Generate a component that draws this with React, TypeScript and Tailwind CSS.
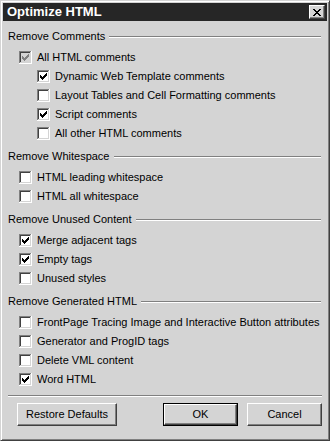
import React from 'react';

type Item = { label: string; checked?: boolean; disabled?: boolean; indent?: boolean };

const sections: { title: string; items: Item[] }[] = [
    {
        title: 'Remove Comments',
        items: [
            { label: 'All HTML comments', checked: true, disabled: true },
            { label: 'Dynamic Web Template comments', checked: true, indent: true },
            { label: 'Layout Tables and Cell Formatting comments', indent: true },
            { label: 'Script comments', checked: true, indent: true },
            { label: 'All other HTML comments', indent: true },
        ],
    },
    {
        title: 'Remove Whitespace',
        items: [{ label: 'HTML leading whitespace' }, { label: 'HTML all whitespace' }],
    },
    {
        title: 'Remove Unused Content',
        items: [
            { label: 'Merge adjacent tags', checked: true },
            { label: 'Empty tags', checked: true },
            { label: 'Unused styles' },
        ],
    },
    {
        title: 'Remove Generated HTML',
        items: [
            { label: 'FrontPage Tracing Image and Interactive Button attributes' },
            { label: 'Generator and ProgID tags' },
            { label: 'Delete VML content' },
            { label: 'Word HTML', checked: true },
        ],
    },
];

// classic 3D checkbox, 13x13
const CheckBox = ({ checked, disabled }: { checked?: boolean; disabled?: boolean }) => {
    const fill = disabled ? '#d4d4d4' : '#ffffff';
    const mark = disabled ? '#808080' : '#000000';
    // each column of the tick is 3px tall
    const cols = [5, 6, 7, 6, 5, 4, 3];
    return (
        <svg width="13" height="13" viewBox="0 0 13 13" shapeRendering="crispEdges" className="shrink-0">
            <rect x="0" y="0" width="13" height="13" fill="#ffffff" />
            <rect x="0" y="0" width="12" height="1" fill="#808080" />
            <rect x="0" y="0" width="1" height="12" fill="#808080" />
            <rect x="1" y="1" width="10" height="1" fill="#404040" />
            <rect x="1" y="1" width="1" height="10" fill="#404040" />
            <rect x="1" y="11" width="11" height="1" fill="#d4d4d4" />
            <rect x="11" y="1" width="1" height="11" fill="#d4d4d4" />
            <rect x="2" y="2" width="9" height="9" fill={fill} />
            {checked &&
                cols.map((y, i) => <rect key={i} x={3 + i} y={y} width="1" height="3" fill={mark} />)}
        </svg>
    );
};

const SectionHeader = ({ title }: { title: string }) => (
    <div className="flex items-center h-[19px] mt-[4px] mb-[2px]">
        <span className="whitespace-nowrap">{title}</span>
        <div className="flex-1 ml-[4px] mr-[1px] mt-[1px] h-[2px] border-t border-t-[#808080] border-b border-b-white" />
    </div>
);

const Button = ({ label, width, isDefault }: { label: string; width: string; isDefault?: boolean }) => (
    <div className={`${width} h-[23px] ${isDefault ? 'border border-black' : ''}`}>
        <div className="h-full flex items-center justify-center border border-t-white border-l-white border-r-[#404040] border-b-[#404040] shadow-[inset_-1px_-1px_0_#808080]">
            {label}
        </div>
    </div>
);

export default function App() {
    return (
        <div
            className="w-[330px] h-[441px] bg-[#d4d4d4] text-black text-[11px] border border-t-[#d4d4d4] border-l-[#d4d4d4] border-r-[#404040] border-b-[#404040] shadow-[inset_1px_1px_0_#fff,inset_-1px_-1px_0_#808080] flex flex-col"
            style={{ fontFamily: '"Liberation Sans", Arial, sans-serif' }}
        >
            {/* title bar */}
            <div className="mx-[2px] mt-[2px] h-[18px] bg-[#262626] flex items-center pl-[4px] pr-[2px]">
                <span className="text-white font-bold text-[13px] flex-1">Optimize HTML</span>
                <div className="w-[16px] h-[14px] bg-[#d4d4d4] border border-t-white border-l-white border-r-[#404040] border-b-[#404040] shadow-[inset_-1px_-1px_0_#808080] flex items-center justify-center">
                    <svg width="8" height="7" viewBox="0 0 8 7" shapeRendering="crispEdges">
                        <path d="M0 0h2v1h1v1h2v-1h1v-1h2v1h-1v1h-1v1h-1v1h1v1h1v1h1v1h-2v-1h-1v-1h-2v1h-1v1h-2v-1h1v-1h1v-1h1v-1h-1v-1h-1v-1h-1z" fill="#000" />
                    </svg>
                </div>
            </div>

            <div className="flex flex-col pl-[7px] pr-[7px] pt-[2px]">
                {sections.map((s) => (
                    <div key={s.title}>
                        <SectionHeader title={s.title} />
                        {s.items.map((it) => (
                            <div
                                key={it.label}
                                className={`flex items-center h-[19px] gap-[5px] ${it.indent ? 'pl-[29px]' : 'pl-[11px]'}`}
                            >
                                <CheckBox checked={it.checked} disabled={it.disabled} />
                                <span className="whitespace-nowrap">{it.label}</span>
                            </div>
                        ))}
                    </div>
                ))}

                <div className="mt-[6px] h-[2px] border-t border-t-[#808080] border-b border-b-white" />

                <div className="flex mt-[6px] pl-[9px]">
                    <Button label="Restore Defaults" width="w-[100px]" />
                    <div className="ml-auto flex gap-[9px]">
                        <Button label="OK" width="w-[75px]" isDefault />
                        <Button label="Cancel" width="w-[75px]" />
                    </div>
                </div>
            </div>
        </div>
    );
}
